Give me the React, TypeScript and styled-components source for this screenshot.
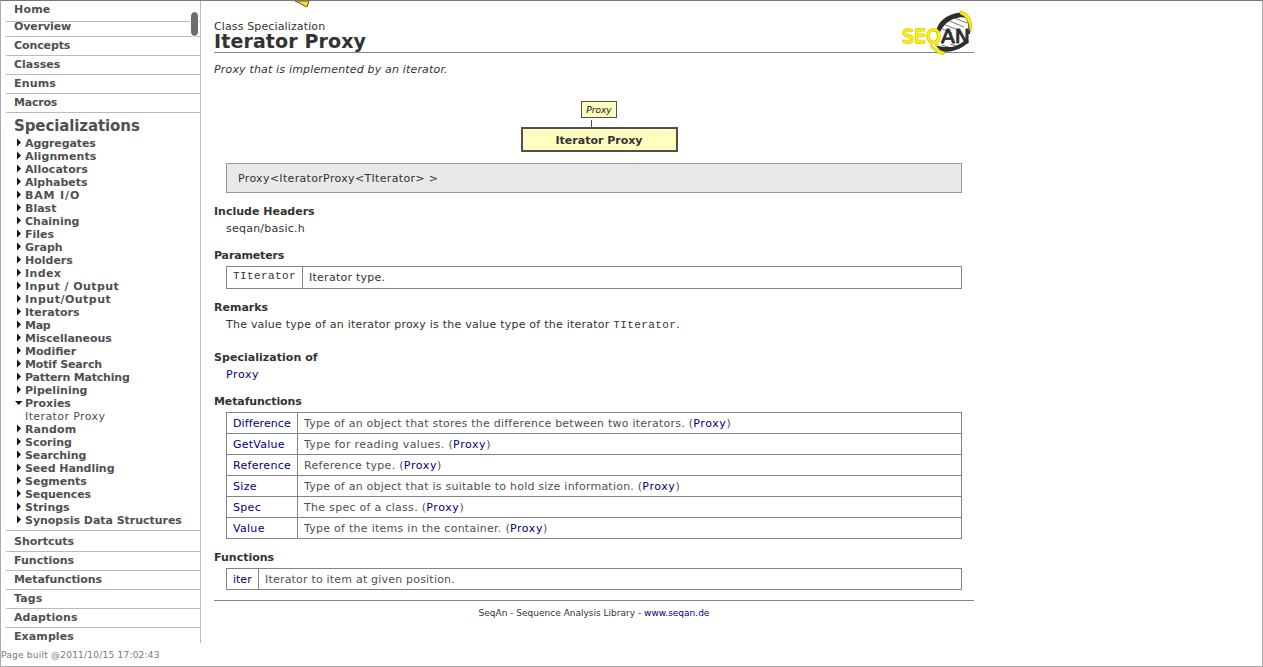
import React from "react";
import styled, { createGlobalStyle } from "styled-components";

const GlobalStyle = createGlobalStyle`
  * { box-sizing: border-box; }
  body {
    margin: 0;
    background: #fff;
    color: #333;
    font: 11px/16px Verdana, "DejaVu Sans", sans-serif;
    overflow: hidden;
  }
`;

const Page = styled.div`
  display: flex;
  width: 1263px;
  height: 667px;
  border: 1px solid #aaa;
  border-top-color: #777;
  background: #fff;
`;

const Sidebar = styled.div`
  display: flex;
  flex-direction: column;
  width: 200px;
  flex: none;
`;

const NavFrame = styled.nav`
  position: relative;
  height: 642px;
  padding-left: 5px;
  border-right: 1px solid #bbb;
  overflow: hidden;
  color: #505050;
`;

const NavItem = styled.div<{ $h?: number; $top?: number; $line?: number; $ls?: number }>`
  height: ${(p) => p.$h ?? 19}px;
  padding: ${(p) => p.$top ?? 0}px 0 0 8px;
  border-bottom: 1px solid #bbb;
  font-weight: bold;
  line-height: ${(p) => p.$line ?? 17}px;
  letter-spacing: ${(p) => p.$ls ?? 0}px;
  white-space: nowrap;
`;

const ScrollThumb = styled.div`
  position: absolute;
  right: 2px;
  top: 11px;
  width: 7px;
  height: 24px;
  border-radius: 4px;
  background: #6d6d6d;
  outline: 1px solid #fff;
`;

const TreeSection = styled.div`
  height: 418px;
  border-bottom: 1px solid #bbb;
`;

const TreeTitle = styled.div`
  height: 24px;
  padding: 1px 0 0 8px;
  font-size: 15px;
  font-weight: bold;
  line-height: 24px;
  letter-spacing: -0.1px;
`;

const TreeRow = styled.div<{ $leaf?: boolean; $ls?: number }>`
  display: flex;
  align-items: flex-start;
  height: 13px;
  padding-left: ${(p) => (p.$leaf ? 19 : 9)}px;
  font-weight: ${(p) => (p.$leaf ? "normal" : "bold")};
  line-height: 13px;
  letter-spacing: ${(p) => p.$ls ?? 0}px;
  white-space: nowrap;
`;

const Arrow = styled.svg`
  flex: none;
  width: 10px;
  height: 12px;
  fill: #111;
`;

const BuildInfo = styled.div`
  height: 23px;
  font-size: 9px;
  line-height: 24px;
  letter-spacing: 0.23px;
  color: #777;
  white-space: nowrap;
`;

const Main = styled.main`
  position: relative;
  width: 773px;
  padding-left: 13px;
`;

const FrameArrow = styled.svg`
  position: absolute;
  left: 93px;
  top: 0;
  width: 18px;
  height: 8px;
`;

const Header = styled.header`
  display: flex;
  justify-content: space-between;
  height: 52px;
  border-bottom: 1px solid #848484;
`;

const Titles = styled.div`
  padding-top: 18px;
`;

const Kind = styled.div`
  height: 14px;
  line-height: 15px;
  letter-spacing: 0.13px;
`;

const Title = styled.h1`
  margin: 0;
  font-size: 19px;
  line-height: 17px;
  letter-spacing: 0.12px;
`;

const Logo = styled.svg`
  width: 74px;
  height: 48px;
  margin-top: 8px;
  overflow: visible;
`;

const Intro = styled.p`
  height: 49px;
  margin: 0;
  padding-top: 9px;
  font-style: italic;
  letter-spacing: 0.17px;
`;

const Diagram = styled.div`
  display: flex;
  flex-direction: column;
  align-items: center;
  padding-left: 10px;
  height: 61px;
`;

const ParentNode = styled.div`
  width: 36px;
  height: 17px;
  margin-top: -1px;
  border: 1px solid #505050;
  background: #ffffc0;
  font-size: 9px;
  font-style: italic;
  line-height: 17px;
  text-align: center;
  color: #111;
`;

const Connector = styled.div`
  width: 1px;
  height: 7px;
  margin: 2px 15px 0 0;
  background: #505050;
`;

const CurrentNode = styled.div`
  width: 157px;
  height: 25px;
  border: 2px solid #505050;
  background: #ffffc0;
  font-weight: bold;
  line-height: 23px;
  text-align: center;
`;

const Signature = styled.div`
  height: 30px;
  margin: 0 12px 10px;
  padding-left: 11px;
  border: 1px solid #999;
  background: #e9e9e9;
  line-height: 30px;
  letter-spacing: 0.33px;
`;

const Section = styled.section<{ $gap: number }>`
  margin-bottom: ${(p) => p.$gap}px;
`;

const Heading = styled.h2<{ $ls?: number }>`
  margin: 0;
  height: 16px;
  font-size: 11px;
  line-height: 18px;
  letter-spacing: ${(p) => p.$ls ?? 0}px;
`;

const Body = styled.div`
  padding-left: 12px;
  height: 17px;
  line-height: 20px;
  letter-spacing: 0.23px;
`;

const Code = styled.code<{ $raised?: boolean }>`
  display: ${(p) => (p.$raised ? "block" : "inline")};
  font: 11px "Courier New", "Liberation Mono", monospace;
  line-height: ${(p) => (p.$raised ? "18px" : "14px")};
  letter-spacing: 0.4px;
`;

const Link = styled.a<{ $ls?: number }>`
  color: #000080;
  letter-spacing: ${(p) => p.$ls ?? 0}px;
`;

const Grid = styled.div<{ $first: number }>`
  display: grid;
  grid-template-columns: ${(p) => p.$first}px 1fr;
  margin: 3px 12px 0;
  border: 1px solid #848484;
  border-bottom: 0;
`;

const Cell = styled.div<{ $h?: number; $line?: number; $muted?: boolean; $ls?: number }>`
  height: ${(p) => p.$h ?? 21}px;
  padding-left: 6px;
  border-bottom: 1px solid #848484;
  line-height: ${(p) => p.$line ?? 22}px;
  color: ${(p) => (p.$muted ? "#505050" : "#333")};
  letter-spacing: ${(p) => p.$ls ?? 0}px;
  white-space: nowrap;
  &:nth-child(odd) { border-right: 1px solid #848484; }
`;

const Footer = styled.footer`
  border-top: 1px solid #848484;
  padding: 4px 0 0;
  font-size: 9px;
  text-align: center;
`;

type Label = [text: string, spacing?: number];

const topItems: Label[] = [["Concepts", -0.1], ["Classes"], ["Enums", 0.15], ["Macros", -0.2]];
const bottomItems: Label[] = [
  ["Functions"], ["Metafunctions", -0.08], ["Tags", 0.1], ["Adaptions", 0.1], ["Examples", 0.1],
];
const tree: Label[] = [
  ["Aggregates", -0.1], ["Alignments", 0.12], ["Allocators", 0.05], ["Alphabets"], ["BAM I/O", 0.85],
  ["Blast"], ["Chaining"], ["Files"], ["Graph"], ["Holders"], ["Index", 0.4],
  ["Input / Output", 0.45], ["Input/Output", 0.5], ["Iterators"], ["Map", -0.3],
  ["Miscellaneous", -0.05], ["Modifier"], ["Motif Search", -0.15], ["Pattern Matching", -0.19],
  ["Pipelining", 0.05], ["Proxies"], ["Iterator Proxy", 0.4], ["Random", 0.1], ["Scoring"],
  ["Searching", -0.1], ["Seed Handling", -0.05], ["Segments"], ["Sequences", -0.1],
  ["Strings"], ["Synopsis Data Structures", -0.03],
];

interface Metafunction {
  name: string;
  nameSpacing: number;
  text: string;
  spacing: number;
}

const metafunctions: Metafunction[] = [
  { name: "Difference", nameSpacing: 0.1, text: "Type of an object that stores the difference between two iterators.", spacing: 0.23 },
  { name: "GetValue", nameSpacing: 0.25, text: "Type for reading values.", spacing: 0.36 },
  { name: "Reference", nameSpacing: 0.3, text: "Reference type.", spacing: 0.3 },
  { name: "Size", nameSpacing: 0.3, text: "Type of an object that is suitable to hold size information.", spacing: 0.23 },
  { name: "Spec", nameSpacing: 0.3, text: "The spec of a class.", spacing: 0.29 },
  { name: "Value", nameSpacing: 0.3, text: "Type of the items in the container.", spacing: 0.27 },
];

function TreeEntry({ label, spacing }: { label: string; spacing?: number }) {
  const leaf = label === "Iterator Proxy";
  return (
    <TreeRow $leaf={leaf} $ls={spacing}>
      {!leaf && (
        <Arrow viewBox="0 0 10 12">
          <path d={label === "Proxies" ? "M0 4H7.5L3.75 8Z" : "M2 1.5V9.5L6 5.5Z"} />
        </Arrow>
      )}
      {label}
    </TreeRow>
  );
}

function SeqanLogo() {
  return (
    <Logo viewBox="0 0 74 48">
      <path d="M36 33C34 18 44 9 63 5C71 20 66 35 43 43Z" fill="#fff" />
      <path
        d="M40 19L52 24M43 15L58 21M47 11L64 18M52 8L67 14M57 6L66 9M42 36L54 40M50 35L60 38"
        stroke="#777"
        strokeWidth="1"
      />
      <path d="M36 24C37 13 46 5 61 3.5L67 8C54 7.500 45 12 39.500 24Z" fill="#2d2d2d" />
      <path d="M66 9C68.500 14 69 20 68 25L70 25C71 19 70 13 67.500 9Z" fill="#2d2d2d" />
      <path d="M69 32C65 38 56 43 42 43L35 36C47 40 58 38 64 32Z" fill="#2d2d2d" />
      <path d="M60 2C69 3.500 73 11 71 22L69.500 21C69.500 13 66 7 60 5Z" fill="#fff000" stroke="#a89a00" strokeWidth=".5" />
      <path d="M31 35C33 39 39 41 45 43L43.500 46C38 44 33 42 30.500 37Z" fill="#fff000" stroke="#a89a00" strokeWidth=".5" />
      <g fontFamily="Verdana, DejaVu Sans, sans-serif" fontSize="19" strokeLinejoin="round">
        <text x="2" y="34" textLength="39" lengthAdjust="spacingAndGlyphs" fill="#fff200" stroke="#ddcb00" strokeWidth="1.6" paintOrder="stroke">SEQ</text>
        <text x="41" y="34" textLength="29" lengthAdjust="spacingAndGlyphs" fill="#2d2d2d" stroke="#2d2d2d" strokeWidth=".9">AN</text>
      </g>
    </Logo>
  );
}

export default function App() {
  return (
    <>
      <GlobalStyle />
      <Page>
        <Sidebar>
          <NavFrame>
            <NavItem $h={21} $ls={0.2}>Home</NavItem>
            <NavItem $h={15} $line={9} $ls={-0.1}>Overview</NavItem>
            {topItems.map(([t, ls]) => <NavItem key={t} $ls={ls}>{t}</NavItem>)}
            <TreeSection>
              <TreeTitle>Specializations</TreeTitle>
              {tree.map(([t, ls]) => <TreeEntry key={t} label={t} spacing={ls} />)}
            </TreeSection>
            <NavItem $h={21} $top={2}>Shortcuts</NavItem>
            {bottomItems.map(([t, ls]) => <NavItem key={t} $ls={ls}>{t}</NavItem>)}
            <ScrollThumb />
          </NavFrame>
          <BuildInfo>Page built @2011/10/15 17:02:43</BuildInfo>
        </Sidebar>
        <Main>
          <FrameArrow viewBox="0 0 18 8">
            <path d="M1 0H15L13 6Z" fill="#ffe000" stroke="#555" />
          </FrameArrow>
          <Header>
            <Titles>
              <Kind>Class Specialization</Kind>
              <Title>Iterator Proxy</Title>
            </Titles>
            <SeqanLogo />
          </Header>
          <Intro>Proxy that is implemented by an iterator.</Intro>
          <Diagram>
            <ParentNode>Proxy</ParentNode>
            <Connector />
            <CurrentNode>Iterator Proxy</CurrentNode>
          </Diagram>
          <Signature>Proxy&lt;IteratorProxy&lt;TIterator&gt; &gt;</Signature>
          <Section $gap={11}>
            <Heading>Include Headers</Heading>
            <Body>seqan/basic.h</Body>
          </Section>
          <Section $gap={10}>
            <Heading $ls={-0.15}>Parameters</Heading>
            <Grid $first={76}>
              <Cell $h={22}><Code $raised>TIterator</Code></Cell>
              <Cell $h={22} $ls={0.26}>Iterator type.</Cell>
            </Grid>
          </Section>
          <Section $gap={17}>
            <Heading>Remarks</Heading>
            <Body>The value type of an iterator proxy is the value type of the iterator <Code>TIterator</Code>.</Body>
          </Section>
          <Section $gap={11}>
            <Heading $ls={0.04}>Specialization of</Heading>
            <Body><Link $ls={0.6}>Proxy</Link></Body>
          </Section>
          <Section $gap={10}>
            <Heading $ls={-0.1}>Metafunctions</Heading>
            <Grid $first={71}>
              {metafunctions.map((m) => (
                <React.Fragment key={m.name}>
                  <Cell><Link $ls={m.nameSpacing}>{m.name}</Link></Cell>
                  <Cell $muted $ls={m.spacing}>{m.text} (<Link $ls={0.6}>Proxy</Link>)</Cell>
                </React.Fragment>
              ))}
            </Grid>
          </Section>
          <Section $gap={10}>
            <Heading>Functions</Heading>
            <Grid $first={32}>
              <Cell><Link>iter</Link></Cell>
              <Cell $muted $ls={0.2}>Iterator to item at given position.</Cell>
            </Grid>
          </Section>
          <Footer>SeqAn - Sequence Analysis Library - <Link>www.seqan.de</Link></Footer>
        </Main>
      </Page>
    </>
  );
}
